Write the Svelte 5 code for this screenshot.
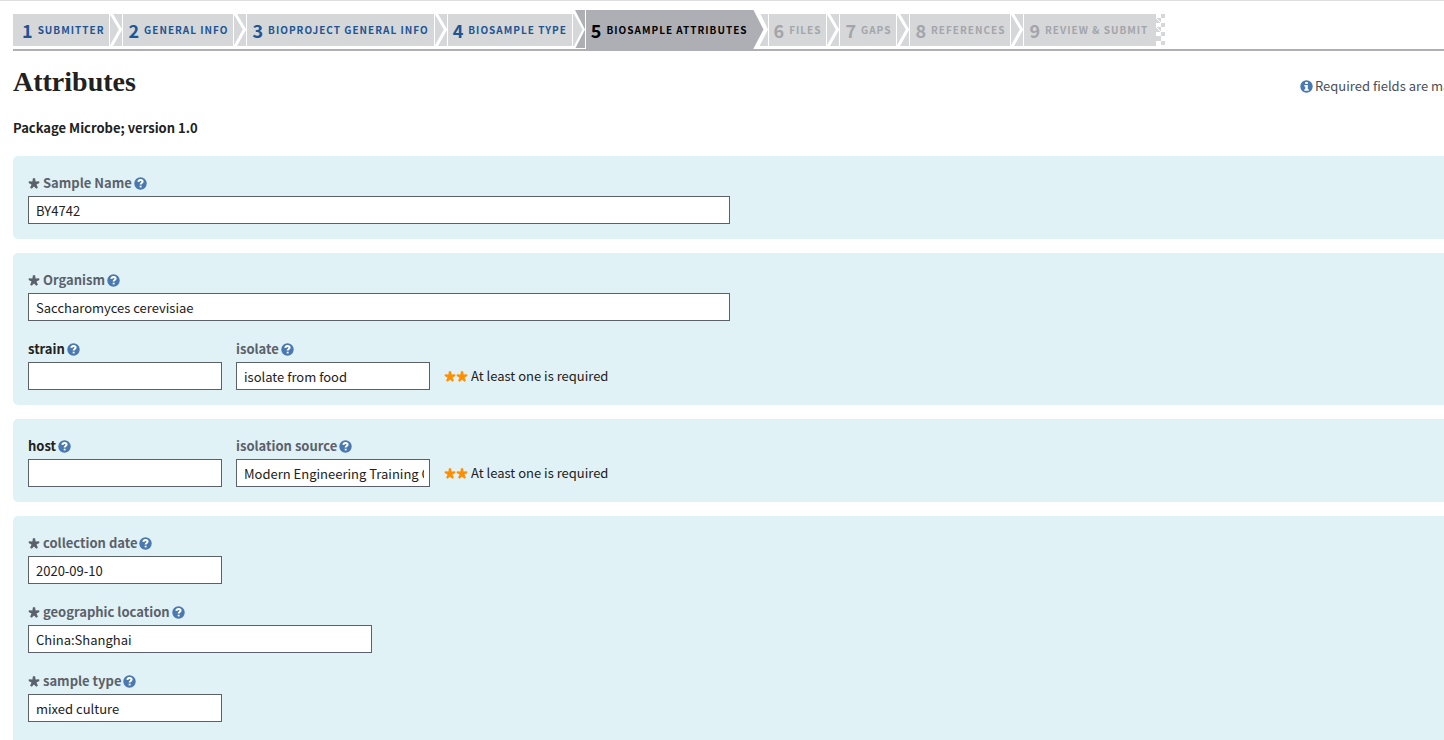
<script>
  const steps = [
    { n: 1, label: 'Submitter', state: 'done' },
    { n: 2, label: 'General info', state: 'done' },
    { n: 3, label: 'BioProject general info', state: 'done' },
    { n: 4, label: 'BioSample type', state: 'done' },
    { n: 5, label: 'BioSample attributes', state: 'current' },
    { n: 6, label: 'Files', state: 'todo' },
    { n: 7, label: 'Gaps', state: 'todo' },
    { n: 8, label: 'References', state: 'todo' },
    { n: 9, label: 'Review & Submit', state: 'todo' }
  ];

  const cards = [
    [{ fields: [{ id: 'sample-name', label: 'Sample Name', value: 'BY4742', size: 'wide', required: true }] }],
    [
      { fields: [{ id: 'organism', label: 'Organism', value: 'Saccharomyces cerevisiae', size: 'wide', required: true }] },
      {
        fields: [
          { id: 'strain', label: 'strain', value: '', size: 'short', strong: true },
          { id: 'isolate', label: 'isolate', value: 'isolate from food', size: 'short' }
        ],
        oneOf: true
      }
    ],
    [
      {
        fields: [
          { id: 'host', label: 'host', value: '', size: 'short', strong: true },
          { id: 'isolation-source', label: 'isolation source', value: 'Modern Engineering Training Center', size: 'short' }
        ],
        oneOf: true
      }
    ],
    [
      { fields: [{ id: 'collection-date', label: 'collection date', value: '2020-09-10', size: 'short', required: true }] },
      { fields: [{ id: 'geo-location', label: 'geographic location', value: 'China:Shanghai', size: 'medium', required: true }] },
      { fields: [{ id: 'sample-type', label: 'sample type', value: 'mixed culture', size: 'short', required: true }] }
    ]
  ];
</script>

{#snippet star()}
  <svg class="star" viewBox="0 0 12 12" aria-hidden="true">
    <path d="M4.900 1.200h2.200l.5 3.200 3.500-.1.300 1.600-2.900 1.700 1.400 3.100-1.600 1L6 9.400l-2.300 2.300-1.600-1 1.400-3.100-2.900-1.700.3-1.600 3.500.1z" />
  </svg>
{/snippet}

<header>
  <nav aria-label="Submission steps">
    <ol>
      {#each steps as step, i}
        <li>
          <a href="#step-{step.n}" class="step {step.state}" class:first={i === 0} class:last={i === steps.length - 1} aria-current={step.state === 'current' ? 'step' : undefined}>
            <span class="num">{step.n}</span><span class="name">{step.label}</span>
          </a>
          {#if i === steps.length - 1}
            <svg class="finish" viewBox="0 0 9 32" width="9" height="32" aria-hidden="true">
              <path d="M5 0h4v4h-4zM0 4h5v5h-5zM5 9h4v4h-4zM0 13h5v5h-5zM5 18h4v4h-4zM0 22h5v5h-5zM5 27h4v4h-4z" />
              <path class="hatch" d="M0 4l5 5M0 13l5 5" />
            </svg>
          {:else if step.state === 'current'}
            <svg class="sep" viewBox="0 0 16 41" width="16" height="41" aria-hidden="true">
              <path class="light" d="M5 4h10v32H5z" />
              <path class="white" d="M0 0h5.500l9.500 19.500L4 41H0z" />
              <path class="dark" d="M0 0h.5l10 19.500L0 39.500z" />
              <path class="dark" d="M0 39h16v2H0z" />
            </svg>
          {:else if steps[i + 1].state === 'current'}
            <svg class="sep" viewBox="0 0 14 41" width="14" height="41" aria-hidden="true">
              <path class="dark" d="M3 0h10v38H3z" />
              <path class="white" d="M0 0h3l10 19.500L3 39H0z" />
              <path class="light" d="M1 4h1l8.500 15.500L2 36H1z" />
              <path class="dark" d="M0 39h14v2H0z" />
            </svg>
          {:else}
            <svg class="sep" viewBox="0 0 14 41" width="14" height="41" aria-hidden="true">
              <path class="light" d="M1 4h12v32H1z" />
              <path class="chevron" d="M1.500 2.500l10 17-10 18" />
              <path class="dark" d="M0 39h14v2H0z" />
            </svg>
          {/if}
        </li>
      {/each}
    </ol>
  </nav>
</header>

<main>
  <div class="title">
    <h1>Attributes</h1>
    <p class="note">
      <svg class="round" viewBox="0 0 13 13" aria-hidden="true">
        <circle cx="6.5" cy="6.5" r="6.2" />
        <path class="glyph" d="M5.200 2h2.600v2H5.200zM4.300 5h3.500v4.300h1v1.500H4.300V9.300h1V6.500h-1z" />
      </svg>
      <span>Required fields are marked</span>
    </p>
  </div>
  <p class="package">Package Microbe; version 1.0</p>

  <form>
    {#each cards as rows}
      <section>
        {#each rows as row}
          <div class="row">
            {#each row.fields as field}
              <div class="field {field.size}">
                <div class="caption">
                  <label for={field.id} class:strong={field.strong}>
                    {#if field.required}{@render star()}{/if}{field.label}
                  </label>
                  <button type="button" aria-label="Help">
                    <svg class="round" viewBox="0 0 13 13" aria-hidden="true">
                      <circle cx="6.5" cy="6.5" r="6.2" />
                      <path class="hook" d="M4.400 4.900C4.500 3.500 5.400 3 6.500 3c1.200 0 2.100.6 2.100 1.600 0 1.400-2 1.400-2 3" />
                      <path class="glyph" d="M5.700 8.700h1.900v1.700H5.700z" />
                    </svg>
                  </button>
                </div>
                <input id={field.id} type="text" value={field.value} />
              </div>
            {/each}
            {#if row.oneOf}
              <p class="hint">{@render star()}{@render star()}<span>At least one is required</span></p>
            {/if}
          </div>
        {/each}
      </section>
    {/each}
  </form>
</main>

<style>
  :global(body) {
    overflow: hidden;
    background: #fff;
    color: #212121;
    font: 13px/20px "Noto Sans CJK SC", "Noto Sans", sans-serif;
  }

  p, h1, ol {
    margin: 0;
    padding: 0;
  }

  header {
    padding: 9px 0 0 13px;
    border-top: 1px solid #dedede;
  }

  ol {
    display: flex;
    height: 39px;
    border-bottom: 2px solid #aeafb5;
    list-style: none;
  }

  li {
    display: flex;
    flex: none;
  }

  .step {
    display: flex;
    align-items: center;
    gap: 5px;
    box-sizing: border-box;
    height: 32px;
    margin-top: 4px;
    padding: 0 5px;
    background: #d6d7d9;
    color: #205493;
    font-weight: 700;
    text-decoration: none;
    white-space: nowrap;
  }

  .step.first {
    padding-left: 9px;
  }

  .step.last {
    padding-right: 8px;
  }

  .step.todo {
    color: #a3a5ab;
  }

  .step.current {
    height: 41px;
    margin-top: 0;
    padding-bottom: 1px;
    background: #aeafb5;
    color: #000;
  }

  .num {
    font-size: 18px;
  }

  .name {
    font-size: 10px;
    letter-spacing: 1px;
    text-transform: uppercase;
  }

  .sep {
    flex: none;
  }

  .finish {
    margin-top: 4px;
  }

  .light, .finish path {
    fill: #d6d7d9;
  }

  .dark {
    fill: #aeafb5;
  }

  .white {
    fill: #fff;
  }

  .chevron {
    fill: none;
    stroke: #fff;
    stroke-width: 3;
  }

  .finish .hatch {
    stroke: #fff;
  }

  main {
    padding-left: 13px;
  }

  .title {
    display: flex;
    justify-content: space-between;
    align-items: center;
    padding-top: 14px;
  }

  h1 {
    font: 700 28px/34px "Liberation Serif", serif;
  }

  .note {
    display: flex;
    align-items: center;
    gap: 2px;
    width: 144px;
    padding-top: 8px;
    overflow: hidden;
    color: #494f57;
    white-space: nowrap;
  }

  .round {
    flex: none;
    width: 13px;
    height: 13px;
    fill: #4a78b0;
  }

  .round .glyph {
    fill: #fff;
  }

  .round .hook {
    fill: none;
    stroke: #fff;
    stroke-width: 2;
  }

  .package {
    padding: 19px 0 18px;
    font-weight: 700;
  }

  form {
    display: grid;
    gap: 14px;
  }

  section {
    display: grid;
    gap: 16px;
    padding: 15px;
    border-radius: 5px 0 0 5px;
    background: #e1f2f6;
  }

  section:last-child {
    padding-bottom: 32px;
  }

  .row {
    display: flex;
    align-items: flex-end;
    gap: 14px;
  }

  .caption {
    display: flex;
    align-items: center;
    gap: 2px;
    height: 24px;
    padding-bottom: 1px;
  }

  label {
    display: flex;
    align-items: center;
    gap: 3px;
    color: #5b616b;
    font-weight: 700;
  }

  label.strong {
    color: #212121;
  }

  .star {
    width: 12px;
    height: 12px;
    fill: #5b616b;
  }

  button {
    display: flex;
    padding: 0;
    border: 0;
    background: none;
  }

  .wide {
    width: 702px;
  }

  .medium {
    width: 344px;
  }

  .short {
    width: 194px;
  }

  input {
    display: block;
    box-sizing: border-box;
    width: 100%;
    height: 28px;
    padding: 0 5px 0 7px;
    border: 1px solid #5b616b;
    border-radius: 0;
    background: #fff;
    color: #212121;
    font: inherit;
  }

  .hint {
    display: flex;
    align-items: center;
    height: 28px;
  }

  .hint .star {
    fill: #ff8f00;
  }

  .hint span {
    padding-left: 3px;
  }
</style>
